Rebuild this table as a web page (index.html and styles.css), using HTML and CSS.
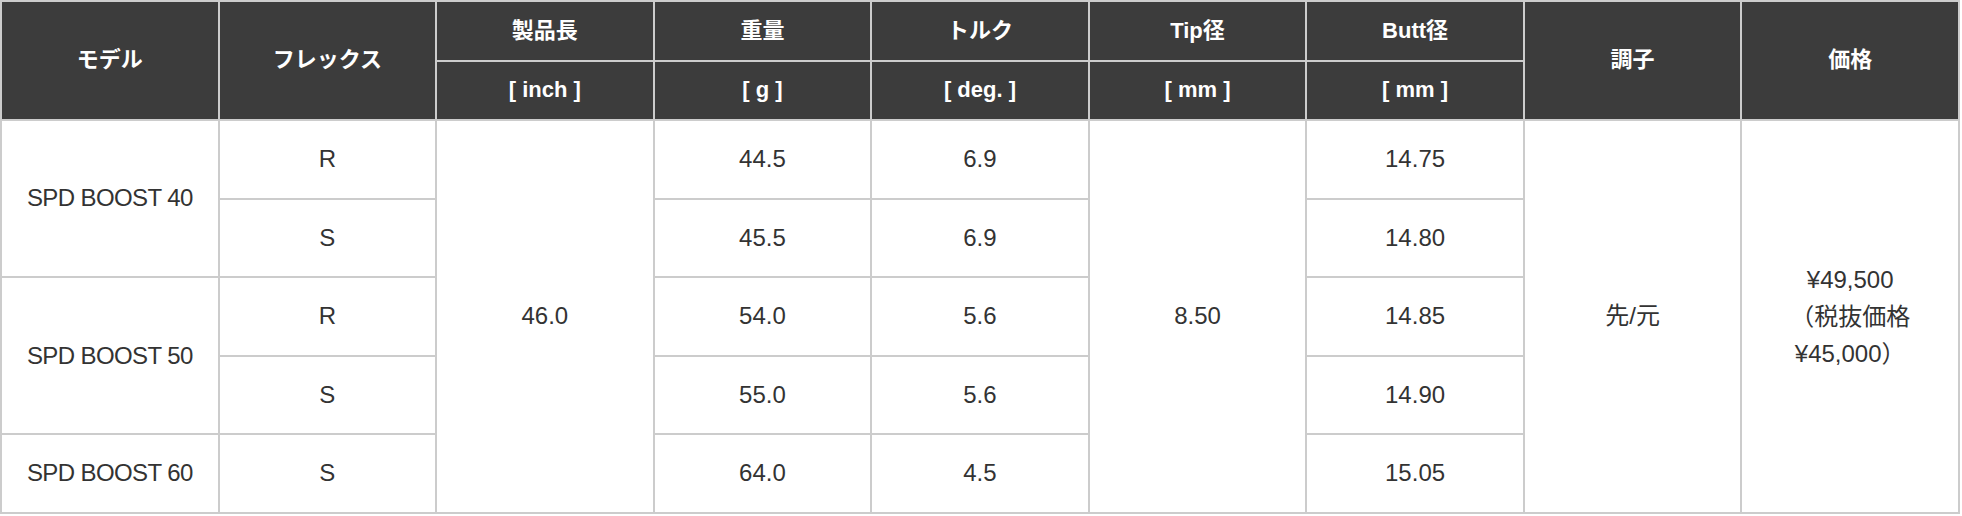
FILE: index.html
```html
<!DOCTYPE html>
<html lang="ja">
<head>
<meta charset="utf-8">
<title>SPD BOOST スペック</title>
<link rel="stylesheet" href="styles.css">
</head>
<body>
<table class="spec">
  <thead>
    <tr class="head-top">
      <th rowspan="2">モデル</th>
      <th rowspan="2">フレックス</th>
      <th>製品長</th>
      <th>重量</th>
      <th>トルク</th>
      <th>Tip径</th>
      <th>Butt径</th>
      <th rowspan="2">調子</th>
      <th rowspan="2">価格</th>
    </tr>
    <tr class="head-unit">
      <th>[ inch ]</th>
      <th>[ g ]</th>
      <th>[ deg. ]</th>
      <th>[ mm ]</th>
      <th>[ mm ]</th>
    </tr>
  </thead>
  <tbody>
    <tr>
      <td rowspan="2" class="model">SPD BOOST 40</td>
      <td>R</td>
      <td rowspan="5">46.0</td>
      <td>44.5</td>
      <td>6.9</td>
      <td rowspan="5">8.50</td>
      <td>14.75</td>
      <td rowspan="5">先/元</td>
      <td rowspan="5" class="price">¥49,500<br>（税抜価格¥45,000）</td>
    </tr>
    <tr>
      <td>S</td>
      <td>45.5</td>
      <td>6.9</td>
      <td>14.80</td>
    </tr>
    <tr>
      <td rowspan="2" class="model">SPD BOOST 50</td>
      <td>R</td>
      <td>54.0</td>
      <td>5.6</td>
      <td>14.85</td>
    </tr>
    <tr>
      <td>S</td>
      <td>55.0</td>
      <td>5.6</td>
      <td>14.90</td>
    </tr>
    <tr>
      <td class="model">SPD BOOST 60</td>
      <td>S</td>
      <td>64.0</td>
      <td>4.5</td>
      <td>15.05</td>
    </tr>
  </tbody>
</table>
</body>
</html>
```

FILE: styles.css
```css
html, body {
  margin: 0;
  padding: 0;
  background: #ffffff;
}

.spec {
  width: 1960px;
  border-collapse: collapse;
  table-layout: fixed;
  font-family: "Liberation Sans", "Noto Sans CJK JP", sans-serif;
  color: #333333;
  border: 2px solid #cccccc;
}

.spec th,
.spec td {
  border: 2px solid #cccccc;
  text-align: center;
  vertical-align: middle;
  padding: 0 10px;
}

.spec th {
  background: #3c3c3c;
  color: #ffffff;
  font-weight: bold;
  font-size: 22px;
  line-height: 1.4;
}

.spec .head-top { height: 60px; }
.spec .head-unit { height: 59px; }

.spec td {
  font-size: 24px;
  line-height: 1.6;
}

.spec tbody tr { height: 78.6px; }

.spec .model {
  letter-spacing: -0.6px;
}

.spec .price {
  line-height: 1.55;
}
```
